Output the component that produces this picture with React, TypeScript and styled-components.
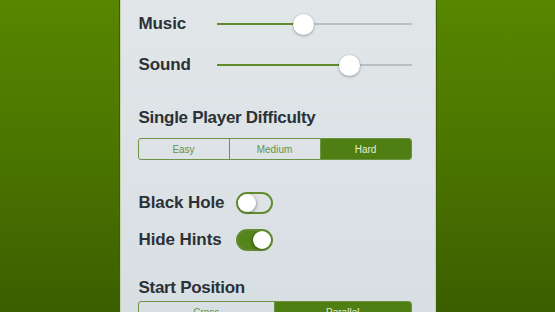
import React, { useState } from "react";
import styled, { createGlobalStyle } from "styled-components";

const GlobalStyle = createGlobalStyle`
  html, body {
    margin: 0;
    padding: 0;
    width: 555px;
    height: 312px;
    overflow: hidden;
  }
  body {
    font-family: "Liberation Sans", Arial, sans-serif;
  }
`;

const Screen = styled.div`
  width: 555px;
  height: 312px;
  background: linear-gradient(180deg, #578600 0%, #4c7700 45%, #3b5e00 100%);
  display: flex;
  justify-content: center;
  overflow: hidden;
`;

const Panel = styled.div`
  width: 316px;
  height: 340px;
  background: linear-gradient(180deg, #e1e6e9 0%, #d7dee1 100%);
  border-left: 1px solid #c9d3b4;
  border-right: 1px solid #c9d3b4;
  box-shadow: -1px 0 0 #3e6100, 1px 0 0 #3e6100;
  padding: 12px 23px 0 18px;
  box-sizing: border-box;
  display: flex;
  flex-direction: column;
`;

const SliderRow = styled.div<{ $gap?: number }>`
  display: flex;
  align-items: center;
  height: 24px;
  margin-top: ${(p) => p.$gap ?? 0}px;
`;

const Label = styled.span<{ $width?: number }>`
  font-size: 17px;
  font-weight: bold;
  color: #2b3137;
  width: ${(p) => (p.$width ? `${p.$width}px` : "auto")};
  flex-shrink: 0;
  letter-spacing: -0.1px;
`;

const Track = styled.div`
  position: relative;
  flex: 1;
  height: 2px;
  background: #babfc2;
`;

const Fill = styled.div`
  height: 100%;
  background: #5f8c2c;
`;

const Thumb = styled.div`
  position: absolute;
  top: 50%;
  width: 21px;
  height: 21px;
  margin-left: -10.5px;
  margin-top: -10.5px;
  border-radius: 50%;
  background: #ffffff;
  box-shadow: 0 1px 3px rgba(0, 0, 0, 0.3), 0 0 0 0.5px rgba(0, 0, 0, 0.06);
`;

const Heading = styled.div<{ $top: number }>`
  font-size: 17px;
  font-weight: bold;
  color: #2b3137;
  margin-top: ${(p) => p.$top}px;
  height: 20px;
  line-height: 20px;
  letter-spacing: -0.3px;
`;

const Segmented = styled.div<{ $top: number }>`
  display: flex;
  margin-top: ${(p) => p.$top}px;
  margin-left: -1px;
  height: 22px;
  border: 1px solid #6e9345;
  border-radius: 3px;
  box-sizing: border-box;
  overflow: hidden;
`;

const Segment = styled.button<{ $active: boolean }>`
  flex: 1;
  border: none;
  border-left: 1px solid #6e9345;
  padding: 0;
  margin: 0;
  background: ${(p) => (p.$active ? "#4f7f12" : "transparent")};
  color: ${(p) => (p.$active ? "#e6eed9" : "#6a9444")};
  font-family: "Liberation Sans", Arial, sans-serif;
  font-size: 10px;
  cursor: pointer;
  &:first-child {
    border-left: none;
  }
`;

const ToggleRow = styled.div<{ $top: number }>`
  display: flex;
  align-items: center;
  height: 24px;
  margin-top: ${(p) => p.$top}px;
`;

const Toggle = styled.button<{ $on: boolean }>`
  position: relative;
  width: 37px;
  height: 22px;
  padding: 0;
  border-radius: 11px;
  border: 2px solid #628c30;
  box-sizing: border-box;
  background: ${(p) => (p.$on ? "#54841a" : "#dfe3e5")};
  cursor: pointer;
`;

const Knob = styled.span<{ $on: boolean }>`
  position: absolute;
  top: 0px;
  left: ${(p) => (p.$on ? "15px" : "0px")};
  width: 18px;
  height: 18px;
  border-radius: 50%;
  background: #ffffff;
  box-shadow: ${(p) =>
    p.$on ? "-1px 1px 3px rgba(0,0,0,0.35)" : "1px 1px 3px rgba(0,0,0,0.3)"};
`;

function Slider({ label, value }: { label: string; value: number }) {
  return (
    <>
      <Label $width={78}>{label}</Label>
      <Track>
        <Fill style={{ width: `${value * 100}%` }} />
        <Thumb style={{ left: `${value * 100}%` }} />
      </Track>
    </>
  );
}

export default function App() {
  const [difficulty, setDifficulty] = useState("Hard");
  const [start, setStart] = useState("Parallel");
  const [blackHole, setBlackHole] = useState(false);
  const [hideHints, setHideHints] = useState(true);

  return (
    <>
      <GlobalStyle />
      <Screen>
        <Panel>
          <SliderRow>
            <Slider label="Music" value={0.445} />
          </SliderRow>
          <SliderRow $gap={17}>
            <Slider label="Sound" value={0.68} />
          </SliderRow>

          <Heading $top={31}>Single Player Difficulty</Heading>
          <Segmented $top={10}>
            {["Easy", "Medium", "Hard"].map((d) => (
              <Segment key={d} $active={difficulty === d} onClick={() => setDifficulty(d)}>
                {d}
              </Segment>
            ))}
          </Segmented>

          <ToggleRow $top={31}>
            <Label $width={97}>Black Hole</Label>
            <Toggle $on={blackHole} onClick={() => setBlackHole(!blackHole)}>
              <Knob $on={blackHole} />
            </Toggle>
          </ToggleRow>
          <ToggleRow $top={13}>
            <Label $width={97}>Hide Hints</Label>
            <Toggle $on={hideHints} onClick={() => setHideHints(!hideHints)}>
              <Knob $on={hideHints} />
            </Toggle>
          </ToggleRow>

          <Heading $top={26}>Start Position</Heading>
          <Segmented $top={3}>
            {["Cross", "Parallel"].map((s) => (
              <Segment key={s} $active={start === s} onClick={() => setStart(s)}>
                {s}
              </Segment>
            ))}
          </Segmented>
        </Panel>
      </Screen>
    </>
  );
}
